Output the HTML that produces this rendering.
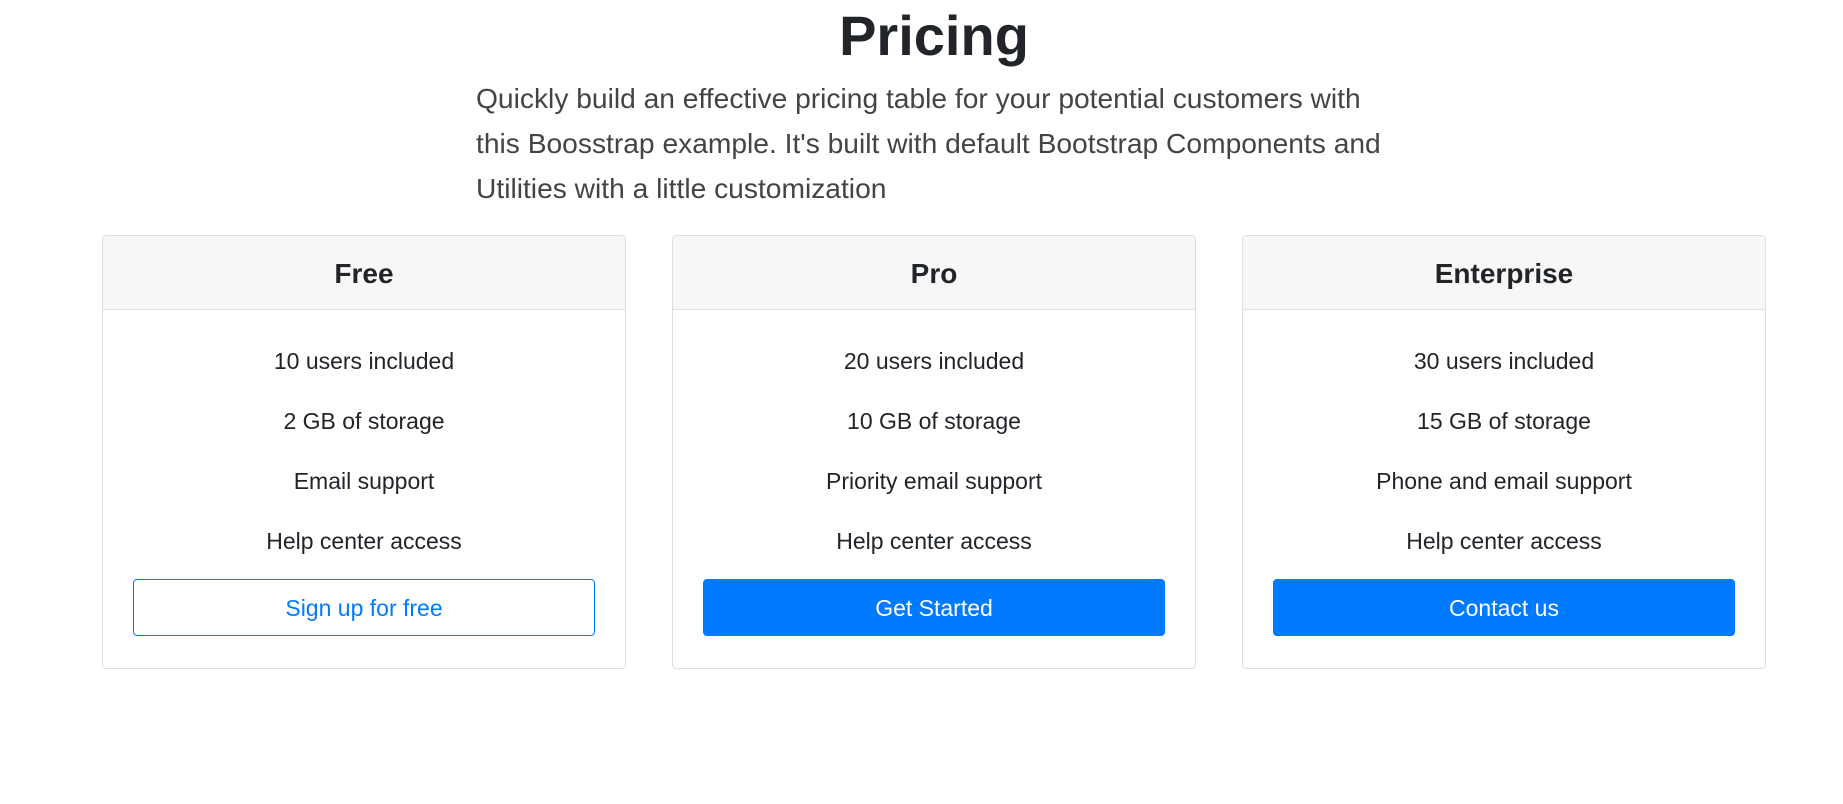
<!DOCTYPE html>
<html><head><meta charset="utf-8"><style>
body{margin:0;width:1843px;height:804px;background:#fff;font-family:"Liberation Sans",sans-serif;color:#212529;position:relative;overflow:hidden}
h1{position:absolute;left:0;width:1868px;top:1px;margin:0;text-align:center;font-size:56px;font-weight:bold;line-height:70px}
.lead{position:absolute;left:476px;top:76px;font-size:28.2px;line-height:45px;font-weight:300;color:#444;white-space:nowrap}
.card{position:absolute;top:235px;width:522px;height:432px;border:1px solid #dfdfdf;border-radius:4px;overflow:hidden}
.hd{height:73px;background:#f7f7f7;border-bottom:1px solid #dfdfdf;text-align:center;line-height:75px;font-size:28px;font-weight:bold}
.it{position:absolute;left:0;width:100%;text-align:center;font-size:23px;line-height:30px}
.btn{position:absolute;left:30px;width:462px;top:343px;height:57px;border-radius:4px;text-align:center;line-height:59px;font-size:23px;box-sizing:border-box}
.o{border:1px solid #007bff;color:#007bff;line-height:57px}
.f{background:#007bff;color:#fff}
</style></head><body>
<h1>Pricing</h1>
<div class="lead">Quickly build an effective pricing table for your potential customers with<br>this Boosstrap example. It's built with default Bootstrap Components and<br>Utilities with a little customization</div>

<div class="card" style="left:102px">
<div class="hd">Free</div>
<div class="it" style="top:110px">10 users included</div>
<div class="it" style="top:170px">2 GB of storage</div>
<div class="it" style="top:230px">Email support</div>
<div class="it" style="top:290px">Help center access</div>
<div class="btn o">Sign up for free</div>
</div>
<div class="card" style="left:672px">
<div class="hd">Pro</div>
<div class="it" style="top:110px">20 users included</div>
<div class="it" style="top:170px">10 GB of storage</div>
<div class="it" style="top:230px">Priority email support</div>
<div class="it" style="top:290px">Help center access</div>
<div class="btn f">Get Started</div>
</div>
<div class="card" style="left:1242px">
<div class="hd">Enterprise</div>
<div class="it" style="top:110px">30 users included</div>
<div class="it" style="top:170px">15 GB of storage</div>
<div class="it" style="top:230px">Phone and email support</div>
<div class="it" style="top:290px">Help center access</div>
<div class="btn f">Contact us</div>
</div>
</body></html>
